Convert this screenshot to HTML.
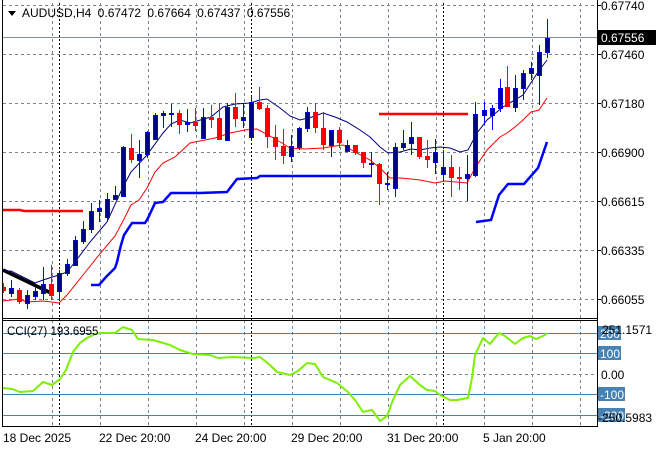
<!DOCTYPE html>
<html><head><meta charset="utf-8"><style>
html,body{margin:0;padding:0;background:#fff;}
svg{display:block;font-family:"Liberation Sans",sans-serif;}
</style></head><body>
<svg width="660" height="450" viewBox="0 0 660 450" xmlns="http://www.w3.org/2000/svg">
<rect width="660" height="450" fill="#fff"/>
<g stroke="#7a8590" stroke-width="1" stroke-dasharray="3,3" shape-rendering="crispEdges">
<line x1="3" y1="5.5" x2="597" y2="5.5"/><line x1="3" y1="54.5" x2="597" y2="54.5"/><line x1="3" y1="103.5" x2="597" y2="103.5"/><line x1="3" y1="152.5" x2="597" y2="152.5"/><line x1="3" y1="201.5" x2="597" y2="201.5"/><line x1="3" y1="250.5" x2="597" y2="250.5"/><line x1="3" y1="299.5" x2="597" y2="299.5"/>
<g><line x1="52.5" y1="3" x2="52.5" y2="318"/><line x1="100.5" y1="3" x2="100.5" y2="318"/><line x1="148.5" y1="3" x2="148.5" y2="318"/><line x1="196.5" y1="3" x2="196.5" y2="318"/><line x1="244.5" y1="3" x2="244.5" y2="318"/><line x1="292.5" y1="3" x2="292.5" y2="318"/><line x1="340.5" y1="3" x2="340.5" y2="318"/><line x1="388.5" y1="3" x2="388.5" y2="318"/><line x1="436.5" y1="3" x2="436.5" y2="318"/><line x1="484.5" y1="3" x2="484.5" y2="318"/><line x1="532.5" y1="3" x2="532.5" y2="318"/><line x1="580.5" y1="3" x2="580.5" y2="318"/></g>
<g><line x1="52.5" y1="320" x2="52.5" y2="426"/><line x1="100.5" y1="320" x2="100.5" y2="426"/><line x1="148.5" y1="320" x2="148.5" y2="426"/><line x1="196.5" y1="320" x2="196.5" y2="426"/><line x1="244.5" y1="320" x2="244.5" y2="426"/><line x1="292.5" y1="320" x2="292.5" y2="426"/><line x1="340.5" y1="320" x2="340.5" y2="426"/><line x1="388.5" y1="320" x2="388.5" y2="426"/><line x1="436.5" y1="320" x2="436.5" y2="426"/><line x1="484.5" y1="320" x2="484.5" y2="426"/><line x1="532.5" y1="320" x2="532.5" y2="426"/><line x1="580.5" y1="320" x2="580.5" y2="426"/></g>
<line x1="3" y1="374.5" x2="597" y2="374.5"/>
</g>
<g stroke="#000" stroke-dasharray="2,2" shape-rendering="crispEdges">
<line x1="59.5" y1="3" x2="59.5" y2="426"/><line x1="251.5" y1="3" x2="251.5" y2="426"/><line x1="443.5" y1="3" x2="443.5" y2="426"/>
</g>
<g stroke="#4682b4" shape-rendering="crispEdges">
<line x1="3" y1="333.5" x2="597" y2="333.5"/><line x1="3" y1="353.5" x2="597" y2="353.5"/><line x1="3" y1="394.5" x2="597" y2="394.5"/><line x1="3" y1="415.5" x2="597" y2="415.5"/>
</g>
<line x1="3" y1="37.5" x2="597" y2="37.5" stroke="#8090a0" shape-rendering="crispEdges"/>
<polyline fill="none" stroke="#ff0000" stroke-width="2.5" points="3,210 20,210 24,211 83,211"/>
<polyline fill="none" stroke="#ff0000" stroke-width="2.5" points="379,114 468,114"/>
<polyline fill="none" stroke="#0000ff" stroke-width="2.5" points="91,285 99,285 106,277 115,268 117,262 121,245 124,235 132,223 145,223 148,218 155,203 163,202 171,193 200,193 227,192 237,179 257,178 260,176 371,176"/>
<polyline fill="none" stroke="#0000ff" stroke-width="2.5" points="476,222 491,220 499,195 508,184 524,184 538,168 547,142"/>
<polyline fill="none" stroke="#000" stroke-width="3.5" points="3,270 51,293"/>
<polyline fill="none" stroke="#000080" stroke-width="1" points="3,271 11,271 35,283 43,280 59,275 67,272 75,262 90,242 107,222 123,187 131,172 147,155 163,133 171,124 180,120 190,123 211,117 223,107 235,104 250,103 260,100 267,99 280,108 290,116 300,120 312,117 323,113 335,117 347,122 360,130 370,137 380,147 388,153 400,152 411,149 420,150 430,148 440,147 450,148 460,152 468,150 477,133 487,120 503,107 523,95 538,72 547,60"/>
<polyline fill="none" stroke="#ff0000" stroke-width="1" points="3,301 11,300 19,299 27,302 43,301 59,303 67,295 83,275 99,255 115,236 123,221 131,205 139,200 147,188 155,172 163,163 175,157 190,143 200,141 215,138 230,133 245,130 257,129 270,136 282,143 290,148 305,149 323,148 335,146 343,145 355,152 370,160 380,168 390,178 400,178 411,179 420,180 435,183 445,181 467,183 475,168 487,150 500,137 507,133 515,127 523,120 531,112 539,110 547,98"/>
<g shape-rendering="crispEdges">
<g stroke="#0000ff" stroke-width="1">
<line x1="11.5" y1="280" x2="11.5" y2="297"/><line x1="27.5" y1="290" x2="27.5" y2="309"/><line x1="35.5" y1="287" x2="35.5" y2="300"/><line x1="43.5" y1="267" x2="43.5" y2="300"/><line x1="59.5" y1="270" x2="59.5" y2="300"/><line x1="67.5" y1="259" x2="67.5" y2="276"/><line x1="75.5" y1="236" x2="75.5" y2="266"/><line x1="83.5" y1="221" x2="83.5" y2="244"/><line x1="91.5" y1="203" x2="91.5" y2="233"/><line x1="99.5" y1="200" x2="99.5" y2="222"/><line x1="107.5" y1="193" x2="107.5" y2="221"/><line x1="115.5" y1="186" x2="115.5" y2="200"/><line x1="123.5" y1="146" x2="123.5" y2="196"/><line x1="139.5" y1="140" x2="139.5" y2="178"/><line x1="147.5" y1="131" x2="147.5" y2="158"/><line x1="155.5" y1="113" x2="155.5" y2="140"/><line x1="163.5" y1="111" x2="163.5" y2="128"/><line x1="171.5" y1="104" x2="171.5" y2="127"/><line x1="187.5" y1="109" x2="187.5" y2="132"/><line x1="203.5" y1="108" x2="203.5" y2="138"/><line x1="227.5" y1="103" x2="227.5" y2="140"/><line x1="243.5" y1="103" x2="243.5" y2="128"/><line x1="251.5" y1="95" x2="251.5" y2="140"/><line x1="291.5" y1="135" x2="291.5" y2="162"/><line x1="299.5" y1="127" x2="299.5" y2="150"/><line x1="307.5" y1="107" x2="307.5" y2="132"/><line x1="331.5" y1="130" x2="331.5" y2="157"/><line x1="347.5" y1="140" x2="347.5" y2="152"/><line x1="371.5" y1="152" x2="371.5" y2="177"/><line x1="387.5" y1="172" x2="387.5" y2="190"/><line x1="395.5" y1="143" x2="395.5" y2="197"/><line x1="403.5" y1="130" x2="403.5" y2="150"/><line x1="411.5" y1="122" x2="411.5" y2="155"/><line x1="435.5" y1="139" x2="435.5" y2="174"/><line x1="443.5" y1="150" x2="443.5" y2="180"/><line x1="467.5" y1="155" x2="467.5" y2="201"/><line x1="475.5" y1="102" x2="475.5" y2="177"/><line x1="484.5" y1="102" x2="484.5" y2="125"/><line x1="492.5" y1="105" x2="492.5" y2="130"/><line x1="500.5" y1="79" x2="500.5" y2="112"/><line x1="515.5" y1="75" x2="515.5" y2="112"/><line x1="523.5" y1="70" x2="523.5" y2="100"/><line x1="531.5" y1="62" x2="531.5" y2="80"/><line x1="539.5" y1="45" x2="539.5" y2="105"/><line x1="547.5" y1="19" x2="547.5" y2="58"/>
</g>
<g fill="#00008b" stroke="#0000ff" stroke-width="1">
<rect x="9.5" y="288.5" width="4" height="5"/><rect x="25.5" y="295.5" width="4" height="8"/><rect x="33.5" y="291.5" width="4" height="5"/><rect x="41.5" y="284.5" width="4" height="9"/><rect x="57.5" y="273.5" width="4" height="18"/><rect x="65.5" y="264.5" width="4" height="9"/><rect x="73.5" y="240.5" width="4" height="25"/><rect x="81.5" y="229.5" width="4" height="12"/><rect x="89.5" y="211.5" width="4" height="18"/><rect x="97.5" y="208.5" width="4" height="3"/><rect x="105.5" y="199.5" width="4" height="18"/><rect x="113.5" y="195.5" width="4" height="4"/><rect x="121.5" y="147.5" width="4" height="49"/><rect x="137.5" y="154.5" width="4" height="6"/><rect x="145.5" y="132.5" width="4" height="22"/><rect x="153.5" y="115.5" width="4" height="24"/><rect x="161.5" y="113.5" width="4" height="2"/><rect x="169.5" y="113.5" width="4" height="1"/><rect x="185.5" y="122.5" width="4" height="2"/><rect x="201.5" y="117.5" width="4" height="21"/><rect x="225.5" y="107.5" width="4" height="33"/><rect x="241.5" y="117.5" width="4" height="3"/><rect x="249.5" y="102.5" width="4" height="35"/><rect x="289.5" y="146.5" width="4" height="10"/><rect x="297.5" y="128.5" width="4" height="19"/><rect x="305.5" y="112.5" width="4" height="16"/><rect x="329.5" y="130.5" width="4" height="15"/><rect x="345.5" y="145.5" width="4" height="6"/><rect x="369.5" y="163.5" width="4" height="1"/><rect x="385.5" y="183.5" width="4" height="1"/><rect x="393.5" y="147.5" width="4" height="41"/><rect x="401.5" y="143.5" width="4" height="4"/><rect x="409.5" y="137.5" width="4" height="6"/><rect x="433.5" y="152.5" width="4" height="10"/><rect x="441.5" y="167.5" width="4" height="7"/><rect x="465.5" y="174.5" width="4" height="4"/><rect x="473.5" y="114.5" width="4" height="61"/><rect x="482.5" y="110.5" width="4" height="5"/><rect x="490.5" y="108.5" width="4" height="7"/><rect x="498.5" y="88.5" width="4" height="20"/><rect x="513.5" y="88.5" width="4" height="19"/><rect x="521.5" y="73.5" width="4" height="15"/><rect x="529.5" y="68.5" width="4" height="5"/><rect x="537.5" y="52.5" width="4" height="23"/><rect x="545.5" y="38.5" width="4" height="14"/>
</g>
<g stroke="#ff0000" stroke-width="1">
<line x1="3.5" y1="283" x2="3.5" y2="293"/><line x1="19.5" y1="288" x2="19.5" y2="304"/><line x1="51.5" y1="265" x2="51.5" y2="300"/><line x1="131.5" y1="134" x2="131.5" y2="163"/><line x1="179.5" y1="110" x2="179.5" y2="134"/><line x1="195.5" y1="108" x2="195.5" y2="131"/><line x1="211.5" y1="105" x2="211.5" y2="128"/><line x1="219.5" y1="103" x2="219.5" y2="140"/><line x1="235.5" y1="93" x2="235.5" y2="127"/><line x1="259.5" y1="87" x2="259.5" y2="110"/><line x1="267.5" y1="105" x2="267.5" y2="148"/><line x1="275.5" y1="125" x2="275.5" y2="160"/><line x1="283.5" y1="129" x2="283.5" y2="164"/><line x1="315.5" y1="103" x2="315.5" y2="133"/><line x1="323.5" y1="112" x2="323.5" y2="150"/><line x1="339.5" y1="127" x2="339.5" y2="148"/><line x1="355.5" y1="145" x2="355.5" y2="155"/><line x1="363.5" y1="152" x2="363.5" y2="168"/><line x1="379.5" y1="163" x2="379.5" y2="205"/><line x1="419.5" y1="137" x2="419.5" y2="159"/><line x1="427.5" y1="140" x2="427.5" y2="168"/><line x1="451.5" y1="155" x2="451.5" y2="197"/><line x1="459.5" y1="167" x2="459.5" y2="190"/><line x1="507.5" y1="66" x2="507.5" y2="107"/>
</g>
<g fill="#ff0000">
<rect x="3" y="287" width="3" height="4"/><rect x="17" y="290" width="5" height="12"/><rect x="49" y="284" width="5" height="12"/><rect x="129" y="148" width="5" height="12"/><rect x="177" y="113" width="5" height="12"/><rect x="193" y="122" width="5" height="4"/><rect x="209" y="117" width="5" height="3"/><rect x="217" y="118" width="5" height="22"/><rect x="233" y="107" width="5" height="12"/><rect x="257" y="102" width="5" height="7"/><rect x="265" y="108" width="5" height="29"/><rect x="273" y="137" width="5" height="10"/><rect x="281" y="146" width="5" height="10"/><rect x="313" y="112" width="5" height="16"/><rect x="321" y="128" width="5" height="17"/><rect x="337" y="130" width="5" height="13"/><rect x="353" y="145" width="5" height="8"/><rect x="361" y="152" width="5" height="11"/><rect x="377" y="164" width="5" height="20"/><rect x="417" y="137" width="5" height="20"/><rect x="425" y="156" width="5" height="4"/><rect x="449" y="167" width="5" height="11"/><rect x="457" y="177" width="5" height="2"/><rect x="505" y="87" width="5" height="20"/>
</g>
</g>
<polyline fill="none" stroke="#7cf000" stroke-width="2" stroke-linejoin="round" points="3,388 12,389 20,392 33,391 43,382 52,385 60,379 66,370 73,352 80,343 87,338 95,334 100,333 115,333 123,327 132,330 138,339 153,340 170,345 180,350 193,354 210,355 218,358 233,357 253,358 260,357 270,365 277,372 290,375 298,371 307,363 315,364 323,377 337,383 348,392 355,400 363,412 372,410 380,421 387,416 393,400 400,385 410,376 420,385 427,390 435,391 440,395 450,400 457,400 468,398 472,378 475,355 483,338 490,344 499,333 505,336 515,344 523,338 530,336 536,339 545,335 547,333"/>
<g stroke="#000" fill="none" shape-rendering="crispEdges">
<line x1="2.5" y1="0" x2="2.5" y2="427"/>
<line x1="597.5" y1="0" x2="597.5" y2="427"/>
<line x1="2" y1="318.5" x2="598" y2="318.5"/>
<line x1="2" y1="320.5" x2="598" y2="320.5"/>
<line x1="2" y1="426.5" x2="598" y2="426.5"/>
</g>
<g stroke="#000" shape-rendering="crispEdges">
<line x1="597" y1="5.5" x2="601" y2="5.5"/><line x1="597" y1="54.5" x2="601" y2="54.5"/><line x1="597" y1="103.5" x2="601" y2="103.5"/><line x1="597" y1="152.5" x2="601" y2="152.5"/><line x1="597" y1="201.5" x2="601" y2="201.5"/><line x1="597" y1="250.5" x2="601" y2="250.5"/><line x1="597" y1="299.5" x2="601" y2="299.5"/>
</g>
<polygon points="8,11 16,11 12,16" fill="#000"/>
<text x="22" y="17" font-size="12" fill="#000" word-spacing="3">AUDUSD,H4 0.67472 0.67664 0.67437 0.67556</text>
<g font-size="12" fill="#000">
<text x="601" y="10">0.67740</text>
<text x="601" y="59">0.67460</text>
<text x="601" y="108">0.67180</text>
<text x="601" y="157">0.66900</text>
<text x="601" y="206">0.66615</text>
<text x="601" y="255">0.66335</text>
<text x="601" y="304">0.66055</text>
</g>
<rect x="598" y="30" width="58" height="15" fill="#000"/>
<text x="601" y="42" font-size="12" fill="#fff">0.67556</text>
<text x="7" y="335" font-size="11.5" fill="#000">CCI(27) 193.6955</text>
<g fill="#4682b4">
<rect x="598" y="326" width="23" height="14"/><rect x="598" y="346" width="23" height="14"/><rect x="598" y="387" width="27" height="14"/><rect x="598" y="408" width="27" height="14"/>
</g>
<g font-size="12">
<text x="600" y="338" fill="#fff">200</text>
<text x="600" y="358" fill="#fff">100</text>
<text x="600" y="399" fill="#fff">-100</text>
<text x="600" y="420" fill="#fff">-200</text>
<text x="601" y="379" fill="#000">0.00</text>
<text x="602" y="334" fill="#000">251.1571</text>
<text x="598" y="422" fill="#000">-250.5983</text>
</g>
<g font-size="12" fill="#000">
<text x="3" y="442">18 Dec 2025</text>
<text x="99" y="442">22 Dec 20:00</text>
<text x="195" y="442">24 Dec 20:00</text>
<text x="291" y="442">29 Dec 20:00</text>
<text x="387" y="442">31 Dec 20:00</text>
<text x="483" y="442">5 Jan 20:00</text>
</g>
</svg>
</body></html>
